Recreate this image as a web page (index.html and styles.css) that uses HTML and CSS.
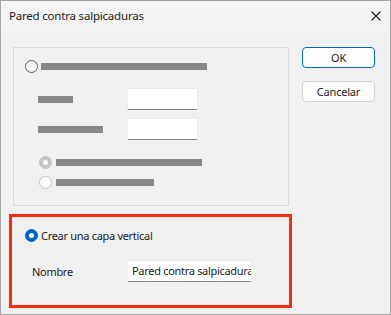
FILE: index.html
```html
<!DOCTYPE html>
<html lang="es">
<head>
    <meta charset="UTF-8">
    <title>Pared contra salpicaduras</title>
    <link rel="stylesheet" href="styles.css">
</head>
<body>
    <div class="window">
        <div class="titlebar">
            <span class="title">Pared contra salpicaduras</span>
            <svg class="close" width="10" height="10" viewBox="0 0 10 10">
                <path d="M0.5 0.5 L9.5 9.5 M9.5 0.5 L0.5 9.5" stroke="#1b1b1b" stroke-width="1.1" fill="none"/>
            </svg>
        </div>
        <div class="content">
            <div class="main">
                <!-- upper group: blurred/disabled options -->
                <div class="group">
                    <div class="option-row">
                        <span class="radio"></span>
                        <span class="bar bar-title"></span>
                    </div>
                    <div class="field-row first">
                        <span class="bar bar-short"></span>
                        <span class="input"></span>
                    </div>
                    <div class="field-row">
                        <span class="bar bar-mid"></span>
                        <span class="input"></span>
                    </div>
                    <div class="sub-options">
                        <div class="option-row">
                            <span class="radio disabled checked"></span>
                            <span class="bar bar-long"></span>
                        </div>
                        <div class="option-row">
                            <span class="radio disabled"></span>
                            <span class="bar bar-small"></span>
                        </div>
                    </div>
                </div>
                <!-- highlighted group -->
                <div class="highlight">
                    <div class="option-row">
                        <span class="radio checked active"></span>
                        <span class="label">Crear una capa vertical</span>
                    </div>
                    <div class="name-row">
                        <span class="label">Nombre</span>
                        <span class="input wide">Pared contra salpicadura</span>
                    </div>
                </div>
            </div>
            <div class="buttons">
                <button class="button default">OK</button>
                <button class="button">Cancelar</button>
            </div>
        </div>
    </div>
</body>
</html>
```

FILE: styles.css
```css
/* Dialog styles */
body {
    margin: 0;
    padding: 0;
    font-family: 'Noto Sans', 'Open Sans', sans-serif;
    font-size: 11px;
    letter-spacing: -0.3px;
    color: #1a1a1a;
    overflow: hidden;
}
.window {
    width: 391px;
    height: 315px;
    box-sizing: border-box;
    border: 1px solid #a3a3a3;
    background-color: #f0f0f0;
    display: flex;
    flex-direction: column;
}
.titlebar {
    height: 30px;
    background-color: #f3f3f3;
    display: flex;
    justify-content: space-between;
    align-items: center;
    padding: 0 9px 0 8px;
}
.title {
    margin-top: -1px;
    font-size: 11.5px;
    letter-spacing: -0.2px;
}
.content {
    display: flex;
    flex: 1;
}
.main {
    display: flex;
    flex-direction: column;
    padding-left: 8px;
}
.group {
    margin: 16px 0 0 4px;
    width: 276px;
    height: 159px;
    box-sizing: border-box;
    border: 1px solid #dadada;
    padding: 12px 0 0 11px;
}
.option-row {
    display: flex;
    align-items: center;
    height: 13px;
}
.radio {
    width: 13px;
    height: 13px;
    box-sizing: border-box;
    border-radius: 50%;
    border: 1px solid #5d5d5d;
    background-color: #f6f6f6;
    flex-shrink: 0;
    position: relative;
}
.radio.disabled {
    border-color: #c6c6c6;
    background-color: #fbfbfb;
}
.radio.checked::after {
    content: '';
    position: absolute;
    left: 3px;
    top: 3px;
    width: 5px;
    height: 5px;
    border-radius: 50%;
    background-color: #fff;
}
.radio.disabled.checked {
    background-color: #c3c3c3;
    border-color: #c3c3c3;
}
.radio.active {
    background-color: #0067c0;
    border-color: #0067c0;
}
.bar {
    display: block;
    height: 7px;
    background-color: #888;
}
.bar-title {
    width: 166px;
    margin-left: 3px;
}
.bar-short { width: 35px; }
.bar-mid { width: 65px; }
.bar-long { width: 146px; margin-left: 4px; }
.bar-small { width: 98px; margin-left: 4px; }
.field-row {
    display: flex;
    align-items: center;
    justify-content: space-between;
    width: 160px;
    margin-left: 13px;
    height: 22px;
    margin-top: 8px;
}
.field-row.first {
    margin-top: 15px;
}
.input {
    display: block;
    width: 71px;
    height: 22px;
    box-sizing: border-box;
    background-color: #fff;
    border: 1px solid #ececec;
    border-bottom: 1px solid #858585;
    border-radius: 2px;
}
.sub-options {
    margin: 16px 0 0 14px;
    display: flex;
    flex-direction: column;
    gap: 7px;
}
.highlight {
    margin-top: 8px;
    width: 283px;
    height: 94px;
    box-sizing: border-box;
    border: 3px solid #ff2a0a;
    padding: 12px 0 0 13px;
}
.label {
    margin-left: 3px;
    line-height: 13px;
}
.name-row {
    display: flex;
    align-items: center;
    margin-top: 18px;
    margin-left: 4px;
}
.name-row .label {
    margin-left: 3px;
    width: 95px;
}
.input.wide {
    width: 125px;
    padding: 2px 0 0 4px;
    line-height: 16px;
    white-space: nowrap;
    overflow: hidden;
}
.buttons {
    display: flex;
    flex-direction: column;
    gap: 13px;
    margin: 16px 0 0 10px;
}
.button {
    width: 73px;
    height: 21px;
    padding: 0;
    font-family: inherit;
    font-size: 11px;
    letter-spacing: -0.2px;
    color: #1a1a1a;
    background-color: #fdfdfd;
    border: 1px solid #d0d0d0;
    border-radius: 4px;
}
.button.default {
    border-color: #0067c0;
}
```
